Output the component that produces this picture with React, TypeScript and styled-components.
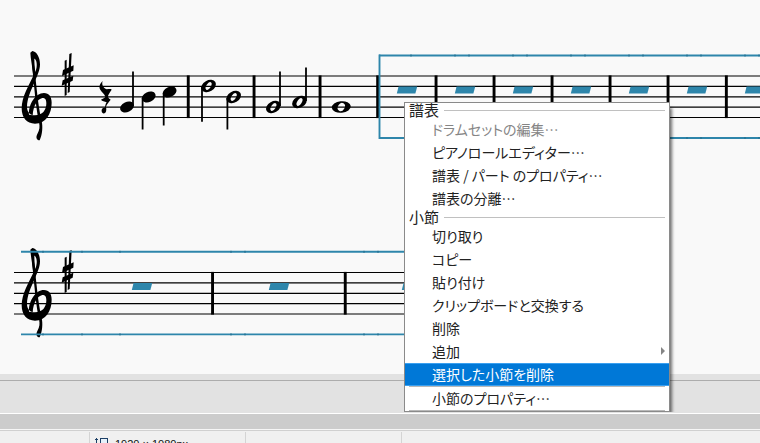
import React from 'react';
import styled, { createGlobalStyle } from 'styled-components';

const GlobalStyle = createGlobalStyle`
  *, *::before, *::after { box-sizing: border-box; }
  html, body { margin: 0; overflow: hidden; }
  body {
    background: #f0f0f0;
    font-family: "Noto Sans CJK JP", "Noto Sans", sans-serif;
  }
`;

const Window = styled.div`
  position: relative;
  display: flex;
  flex-direction: column;
  height: 100vh;
  overflow: hidden;
`;

const ScoreView = styled.main`
  flex: none;
  background: #f9f9f9;
`;

const ScoreDrawing = styled.svg`
  display: block;
  width: 100%;
  height: 374px;
`;

const PanelEdge = styled.div`
  flex: none;
  height: 7px;
  background: #e2e2e2;
  border-bottom: 1px solid #acacac;
`;

const Panel = styled.div`
  flex: none;
  height: 33px;
  background: #e2e2e2;
  border-bottom: 1px solid #ffffff;
`;

const Splitter = styled.div`
  flex: none;
  height: 15px;
  background: #cccccc;
`;

const StatusBar = styled.footer`
  flex: none;
  display: grid;
  grid-template-columns: 90px 156px 156px 1fr;
  border-top: 1px solid #f6f6f6;
  background: #f0f0f0;
  box-shadow: inset 0 1px #d0d0d0;
  padding-top: 2px;
`;

const StatusCell = styled.div`
  display: flex;
  align-items: center;
  gap: 6px;
  height: 24px;
  padding-left: 5px;
  border-right: 1px solid #d4d4d4;
  font: 11px/24px "Liberation Sans", sans-serif;
  color: #111111;

  &:last-child { border-right: 0; }
`;

const Menu = styled.div`
  position: absolute;
  left: 404px;
  top: 102px;
  display: flex;
  flex-direction: column;
  width: 266px;
  border: 1px solid #8a8a8a;
  background: #ffffff;
  box-shadow: 4px 4px 3px -2px rgba(0, 0, 0, 0.55);
  clip-path: inset(0 -6px 0 0);
`;

const MenuHeading = styled.div`
  display: flex;
  align-items: center;
  gap: 5px;
  height: 15px;
  padding: 0 4px;
  font-size: 15px;
  line-height: 15px;
  color: #222222;
  font-feature-settings: "palt";

  &::after {
    content: "";
    flex: 1;
    height: 1px;
    background: #c0c0c0;
  }
`;

const HeadingText = styled.span`
  padding-bottom: 2px;
`;

const MenuItem = styled.button<{ $active?: boolean }>`
  display: flex;
  align-items: center;
  justify-content: space-between;
  height: 23px;
  margin: 0;
  padding: 0 4px 2px 27px;
  border: 0;
  background: ${(p) => (p.$active ? '#0078d7' : 'transparent')};
  box-shadow: ${(p) => (p.$active ? 'inset 0 1px #3aa0f0, inset 0 -1px #3aa0f0' : 'none')};
  color: ${(p) => (p.$active ? '#ffffff' : '#222222')};
  font-family: inherit;
  font-size: 14px;
  line-height: 20px;
  font-feature-settings: "palt";
  text-align: left;
  white-space: nowrap;

  &:disabled { color: #858585; }
`;

const MenuSeparator = styled.hr`
  width: auto;
  height: 1px;
  margin: 0 4px;
  border: 0;
  background: #b8b8b8;
`;

const BLUE = '#2e86ab';
const STAFF_OFFSETS = [0, 10.4, 20.8, 31.1, 41.5];

function ellipse(rx: number, ry: number, deg: number) {
  const a = (deg * Math.PI) / 180;
  const x = rx * Math.cos(a);
  const y = rx * Math.sin(a);
  return `M${x} ${y}A${rx} ${ry} ${deg} 1 1 ${-x} ${-y}A${rx} ${ry} ${deg} 1 1 ${x} ${y}Z`;
}

const HEADS = {
  quarter: ellipse(7.3, 5, -25),
  half: ellipse(7.8, 5.6, -30) + ellipse(4.3, 2.2, -58),
  whole: ellipse(9.5, 5.8, -6) + ellipse(4.4, 3.3, -60),
};

type NoteKind = keyof typeof HEADS;

const NOTES: { kind: NoteKind; x: number; y: number; stem?: [number, number] }[] = [
  { kind: 'quarter', x: 127, y: 107, stem: [133, 71.5] },
  { kind: 'quarter', x: 148.7, y: 97, stem: [142.6, 129.5] },
  { kind: 'quarter', x: 169.6, y: 92, stem: [163.7, 125.5] },
  { kind: 'half', x: 208.6, y: 86, stem: [202, 121.7] },
  { kind: 'half', x: 233.7, y: 97, stem: [227.4, 129.5] },
  { kind: 'half', x: 273.4, y: 107, stem: [280, 71.5] },
  { kind: 'half', x: 299.5, y: 102, stem: [306, 67.5] },
  { kind: 'whole', x: 341.3, y: 107 },
];

const Staff = ({ y, end = '100%' }: { y: number; end?: string | number }) => (
  <g stroke="#000" strokeWidth="1.2">
    {STAFF_OFFSETS.map((dy) => (
      <line key={dy} x1="14" x2={end} y1={y + dy} y2={y + dy} />
    ))}
  </g>
);

const Barlines = ({ y, xs }: { y: number; xs: number[] }) => (
  <g fill="#000">
    {xs.map((x) => (
      <rect key={x} x={x - 1.4} y={y - 0.6} width="2.9" height="42.7" />
    ))}
  </g>
);

const MeasureRests = ({ y, xs }: { y: number; xs: number[] }) => (
  <g fill={BLUE}>
    {xs.map((x) => (
      <path key={x} d={`M${x + 1.6} ${y}h18.6l-1.8 7h-18.6z`} />
    ))}
  </g>
);

const SelectionTicks = ({ ys, xs }: { ys: number[]; xs: number[] }) => (
  <g fill="#23708f">
    {ys.flatMap((y) => xs.map((x) => <rect key={`${x}-${y}`} x={x - 1} y={y - 1} width="2" height="2" opacity="0.6" />))}
  </g>
);

/* Treble clef and F-sharp key signature, drawn on a grid of thirds of a pixel. */
const ClefAndKey = ({ dy }: { dy: number }) => (
  <g transform={`translate(0 ${40 + dy}) scale(0.33333)`} fill="#000">
    <path
      fillRule="evenodd"
      d="M97 33C110 34 120 52 120 73C120 91 112 106 104 126C93 150 81 177 81 200C81 216 89 226 105 226C127 226 139 211 139 190C139 179 136 174 127 174C112 177 100 197 98 226L87 224C85 195 105 159 132 159C147 159 155 170 155 188C155 222 137 251 105 251C80 251 65 233 65 205C65 170 86 137 100 107C97 80 92 57 91 38ZM103 56C103 68 104 80 106 96C111 84 112 68 107 60C106 57 104 56 103 56Z"
    />
    <path d="M96 75L102 74L111 155C114 185 119 218 125 243C129 260 127 284 119 301C109 301 107 291 112 282C119 270 120 261 117 247C112 222 107 188 104 155Z" />
    <path d="M194 62L200 59V165L194 168ZM208 42L215 39L209 156L203 159Z" />
    <path d="M189 90L221 76L220 92L186 108ZM188 121L220 107L218 122L185 137Z" />
  </g>
);

const QuarterRest = () => (
  <path
    transform="translate(90 60) scale(0.33333)"
    d="M38 63C34 74 40 84 50 88C57 88 62 86 65 89C58 100 54 104 54 110C56 116 60 117 62 119C56 127 51 131 48 140C49 146 50 153 46 158C42 162 36 161 35 154C34 146 40 143 45 142C46 134 48 130 50 127C44 124 36 124 33 119C38 115 46 114 46 110C44 102 34 96 30 88C26 80 30 70 38 63Z"
  />
);

const Score = () => (
  <ScoreDrawing role="img" aria-label="楽譜">
    <Staff y={76} />
    <ClefAndKey dy={0} />
    <QuarterRest />
    {NOTES.map((n) => (
      <g key={n.x}>
        <path transform={`translate(${n.x} ${n.y})`} fillRule="evenodd" d={HEADS[n.kind]} />
        {n.stem && (
          <line
            x1={n.stem[0]}
            x2={n.stem[0]}
            y1={n.stem[1] < n.y ? n.y - 1 : n.y + 1}
            y2={n.stem[1]}
            stroke="#000"
            strokeWidth="1.8"
          />
        )}
      </g>
    ))}
    <Barlines y={76} xs={[188.2, 254, 320, 377.6, 436, 494, 552, 610, 668, 726.3]} />
    <MeasureRests y={86.4} xs={[397, 455, 513, 571, 629, 687, 745]} />
    <g stroke={BLUE} strokeWidth="1.9">
      <line x1="379.5" x2="379.5" y1="54.5" y2="139" />
      <line x1="379" x2="100%" y1="55.5" y2="55.5" />
      <line x1="379" x2="100%" y1="138" y2="138" />
    </g>
    <SelectionTicks ys={[55.5, 138]} xs={[411, 455, 469, 513, 527, 571, 585, 629, 643, 687, 701, 745, 759]} />

    <Staff y={272.5} end={478} />
    <ClefAndKey dy={-3 + 200} />
    <Barlines y={272.5} xs={[212.5, 345.2, 478]} />
    <MeasureRests y={283} xs={[132, 269, 402]} />
    <g stroke={BLUE} strokeWidth="1.9">
      <line x1="21" x2="479" y1="251.8" y2="251.8" />
      <line x1="21" x2="479" y1="334.4" y2="334.4" />
    </g>
    <SelectionTicks ys={[251.8, 334.4]} xs={[43, 82, 120, 231, 245, 364, 378]} />
  </ScoreDrawing>
);

const SubmenuArrow = () => (
  <svg width="4" height="8" viewBox="0 0 4 8" aria-hidden="true">
    <path d="M0 0L4 4L0 8Z" fill="#858585" />
  </svg>
);

const PageSizeIcon = () => (
  <svg width="14" height="14" viewBox="0 0 14 14" fill="none" stroke="#1c3f66" aria-hidden="true">
    <path d="M1.5 1V13M0 2.5H3M0 11.5H3" />
    <rect x="5.5" y="1.5" width="7" height="9" fill="#e6f1fa" />
    <path d="M4 13.5H14" />
  </svg>
);

export default function App() {
  return (
    <>
      <GlobalStyle />
      <Window>
        <ScoreView>
          <Score />
        </ScoreView>
        <PanelEdge />
        <Panel />
        <Splitter />
        <StatusBar>
          <StatusCell />
          <StatusCell>
            <PageSizeIcon />
            1920 × 1080px
          </StatusCell>
          <StatusCell />
          <StatusCell />
        </StatusBar>

        <Menu role="menu">
          <MenuHeading><HeadingText>譜表</HeadingText></MenuHeading>
          <MenuItem role="menuitem" disabled>ドラムセットの編集…</MenuItem>
          <MenuItem role="menuitem">ピアノロールエディター…</MenuItem>
          <MenuItem role="menuitem">譜表 / パート のプロパティ…</MenuItem>
          <MenuItem role="menuitem">譜表の分離…</MenuItem>
          <MenuHeading><HeadingText>小節</HeadingText></MenuHeading>
          <MenuItem role="menuitem">切り取り</MenuItem>
          <MenuItem role="menuitem">コピー</MenuItem>
          <MenuItem role="menuitem">貼り付け</MenuItem>
          <MenuItem role="menuitem">クリップボードと交換する</MenuItem>
          <MenuItem role="menuitem">削除</MenuItem>
          <MenuItem role="menuitem" aria-haspopup="menu">
            追加
            <SubmenuArrow />
          </MenuItem>
          <MenuItem role="menuitem" $active>選択した小節を削除</MenuItem>
          <MenuSeparator />
          <MenuItem role="menuitem">小節のプロパティ…</MenuItem>
          <MenuSeparator />
        </Menu>
      </Window>
    </>
  );
}
